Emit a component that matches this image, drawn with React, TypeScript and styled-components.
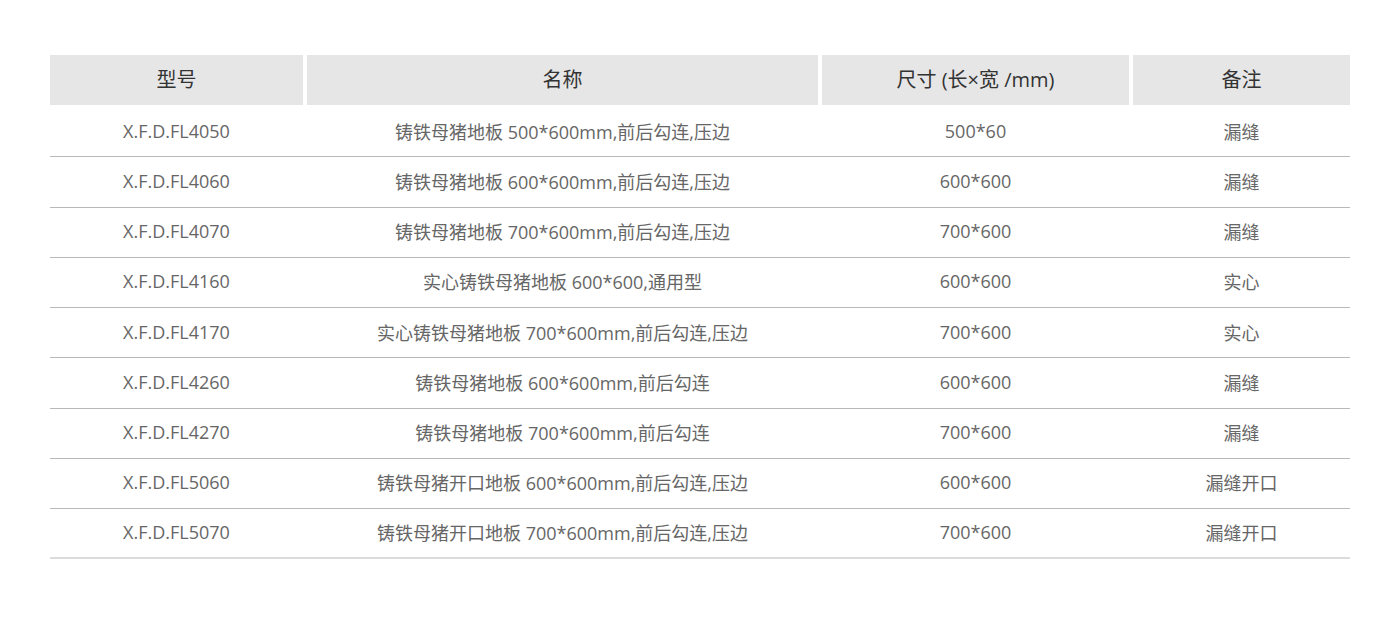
import React from "react";
import styled, { createGlobalStyle } from "styled-components";

const GlobalStyle = createGlobalStyle`
  html, body {
    margin: 0;
    padding: 0;
    background: #ffffff;
  }
  body {
    font-family: "Open Sans", "Noto Sans CJK SC", sans-serif;
  }
`;

const COLS = "253px 511px 307px 217px";

const Page = styled.div({
  width: "1400px",
  height: "618px",
  padding: "55px 50px 0",
  boxSizing: "border-box",
});

const Table = styled.div({
  width: "1300px",
  display: "flex",
  flexDirection: "column",
});

const HeaderRow = styled.div({
  display: "grid",
  gridTemplateColumns: COLS,
  columnGap: "4px",
  height: "52px",
  paddingBottom: "2px",
  boxSizing: "border-box",
});

const HeaderCell = styled.div({
  backgroundColor: "#e6e6e7",
  display: "flex",
  alignItems: "center",
  justifyContent: "center",
  color: "#333333",
  fontSize: "20px",
  paddingBottom: "3px",
  boxSizing: "border-box",
});

const BodyRow = styled.div<{ $last?: boolean }>(({ $last }) => ({
  display: "grid",
  gridTemplateColumns: COLS,
  columnGap: "4px",
  height: "50.25px",
  boxSizing: "border-box",
  borderBottom: $last ? "2px solid #dcdcdc" : "1px solid #b8b8b8",
}));

const BodyCell = styled.div({
  display: "flex",
  alignItems: "center",
  justifyContent: "center",
  color: "#666666",
  fontSize: "18px",
  whiteSpace: "nowrap",
  paddingBottom: "2px",
  boxSizing: "border-box",
});

const headers = ["型号", "名称", "尺寸 (长×宽 /mm)", "备注"];

const rows: string[][] = [
  ["X.F.D.FL4050", "铸铁母猪地板 500*600mm,前后勾连,压边", "500*60", "漏缝"],
  ["X.F.D.FL4060", "铸铁母猪地板 600*600mm,前后勾连,压边", "600*600", "漏缝"],
  ["X.F.D.FL4070", "铸铁母猪地板 700*600mm,前后勾连,压边", "700*600", "漏缝"],
  ["X.F.D.FL4160", "实心铸铁母猪地板 600*600,通用型", "600*600", "实心"],
  ["X.F.D.FL4170", "实心铸铁母猪地板 700*600mm,前后勾连,压边", "700*600", "实心"],
  ["X.F.D.FL4260", "铸铁母猪地板 600*600mm,前后勾连", "600*600", "漏缝"],
  ["X.F.D.FL4270", "铸铁母猪地板 700*600mm,前后勾连", "700*600", "漏缝"],
  ["X.F.D.FL5060", "铸铁母猪开口地板 600*600mm,前后勾连,压边", "600*600", "漏缝开口"],
  ["X.F.D.FL5070", "铸铁母猪开口地板 700*600mm,前后勾连,压边", "700*600", "漏缝开口"],
];

const App = () => (
  <>
    <GlobalStyle />
    <Page>
      <Table>
        <HeaderRow>
          {headers.map((h) => (
            <HeaderCell key={h}>{h}</HeaderCell>
          ))}
        </HeaderRow>
        {rows.map((row, i) => (
          <BodyRow key={row[0]} $last={i === rows.length - 1}>
            {row.map((cell, j) => (
              <BodyCell key={j}>{cell}</BodyCell>
            ))}
          </BodyRow>
        ))}
      </Table>
    </Page>
  </>
);

export default App;
